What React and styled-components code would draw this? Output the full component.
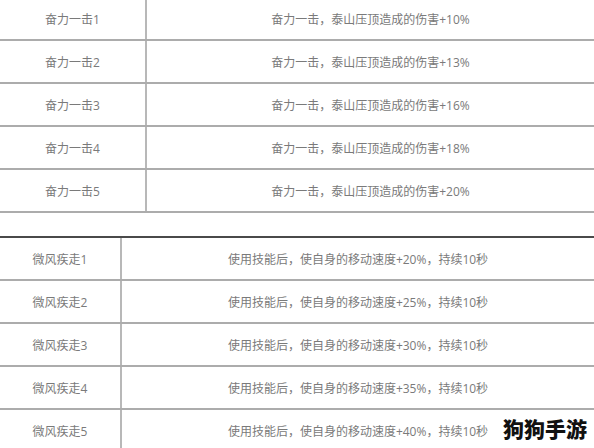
import React from "react";
import styled, { createGlobalStyle } from "styled-components";

const Global = createGlobalStyle`
  html, body { margin: 0; padding: 0; background: #fff; }
  body { width: 594px; height: 448px; overflow: hidden; position: relative;
    font-family: "Open Sans", "Noto Sans CJK SC", sans-serif; }
`;

const Page = styled.div`
  width: 594px;
  height: 448px;
  position: relative;
  overflow: hidden;
  background: #fff;
`;

const Table = styled.div`
  display: flex;
  flex-direction: column;
  margin-top: ${(p) => p.$mt}px;
  border-top: ${(p) => (p.$topLine ? "2px solid #4a4a4a" : "none")};
`;

const Row = styled.div`
  display: grid;
  grid-template-columns: ${(p) => p.$first}px 1fr;
  height: 41px;
  border-bottom: 2px solid #acacac;
`;

const Cell = styled.div`
  display: flex;
  align-items: center;
  justify-content: center;
  font-family: "Open Sans", "Noto Sans CJK SC", sans-serif;
  font-size: 12px;
  color: #7a7a7a;
  white-space: nowrap;
`;

const NameCell = styled(Cell)`
  border-right: 2px solid #b8b8b8;
`;

const Watermark = styled.div`
  position: absolute;
  right: 7px;
  bottom: 8px;
  font-family: "Noto Sans CJK SC", sans-serif;
  font-size: 21px;
  font-weight: 900;
  color: #111;
  line-height: 24px;
  text-shadow: 0 0 3px #fff, 0 0 3px #fff;
`;

const t1 = [
  ["奋力一击1", "奋力一击，泰山压顶造成的伤害+10%"],
  ["奋力一击2", "奋力一击，泰山压顶造成的伤害+13%"],
  ["奋力一击3", "奋力一击，泰山压顶造成的伤害+16%"],
  ["奋力一击4", "奋力一击，泰山压顶造成的伤害+18%"],
  ["奋力一击5", "奋力一击，泰山压顶造成的伤害+20%"],
];

const t2 = [
  ["微风疾走1", "使用技能后，使自身的移动速度+20%，持续10秒"],
  ["微风疾走2", "使用技能后，使自身的移动速度+25%，持续10秒"],
  ["微风疾走3", "使用技能后，使自身的移动速度+30%，持续10秒"],
  ["微风疾走4", "使用技能后，使自身的移动速度+35%，持续10秒"],
  ["微风疾走5", "使用技能后，使自身的移动速度+40%，持续10秒"],
];

export default function App() {
  return (
    <Page>
      <Global />
      <Table $mt={-2}>
        {t1.map(([a, b]) => (
          <Row key={a} $first={147}>
            <NameCell>{a}</NameCell>
            <Cell>{b}</Cell>
          </Row>
        ))}
      </Table>
      <Table $mt={23} $topLine>
        {t2.map(([a, b]) => (
          <Row key={a} $first={122}>
            <NameCell>{a}</NameCell>
            <Cell>{b}</Cell>
          </Row>
        ))}
      </Table>
      <Watermark>狗狗手游</Watermark>
    </Page>
  );
}
